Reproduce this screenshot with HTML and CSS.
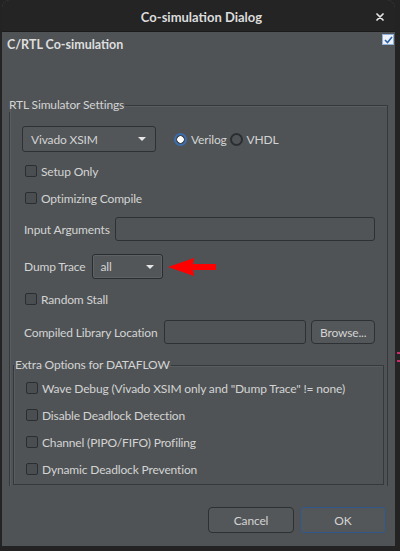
FILE: index.html
```html
<!DOCTYPE html>
<html>
<head>
<meta charset="utf-8">
<link rel="stylesheet" href="styles.css">
</head>
<body>
<div class="desktop">
  <div class="window">
    <div class="titlebar">
      <span class="title">Co-simulation Dialog</span>
      <svg class="close" width="8" height="8" viewBox="0 0 8 8"><path d="M1 1 L7 7 M7 1 L1 7" stroke="#e6e6e6" stroke-width="1.7" stroke-linecap="round"/></svg>
    </div>
    <div class="body">
      <div class="header">
        <span class="heading">C/RTL Co-simulation</span>
        <span class="enable-box"><svg width="9" height="8" viewBox="0 0 9 8"><path d="M1 4 L3.5 6.5 L8 1" fill="none" stroke="#2c63a8" stroke-width="1.6"/></svg></span>
      </div>
      <div class="scroll">
        <fieldset class="group outer">
          <legend>RTL Simulator Settings</legend>
          <div class="row sim-row">
            <div class="combo sim-combo"><span>Vivado XSIM</span><i class="arrow"></i></div>
            <label class="radio"><span class="dot on"></span>Verilog</label>
            <label class="radio"><span class="dot"></span>VHDL</label>
          </div>
          <div class="row check first"><span class="box"></span>Setup Only</div>
          <div class="row check"><span class="box"></span>Optimizing Compile</div>
          <div class="row field args-row">
            <span class="lbl">Input Arguments</span>
            <div class="input grow"></div>
          </div>
          <div class="row field dump-row">
            <span class="lbl">Dump Trace</span>
            <div class="combo dump-combo"><span>all</span><i class="arrow"></i></div>
            <svg class="red-arrow" width="50" height="18" viewBox="0 0 50 18"><polygon points="0,9 26,0 25,6 48,6 48,12 25,12 26,18" fill="#ff0000"/></svg>
          </div>
          <div class="row check stall"><span class="box"></span>Random Stall</div>
          <div class="row field lib-row">
            <span class="lbl">Compiled Library Location</span>
            <div class="input lib-input"></div>
            <div class="button browse">Browse...</div>
          </div>
          <fieldset class="group inner">
            <legend>Extra Options for DATAFLOW</legend>
            <div class="row check"><span class="box"></span>Wave Debug (Vivado XSIM only and "Dump Trace" != none)</div>
            <div class="row check"><span class="box"></span>Disable Deadlock Detection</div>
            <div class="row check"><span class="box"></span>Channel (PIPO/FIFO) Profiling</div>
            <div class="row check"><span class="box"></span>Dynamic Deadlock Prevention</div>
          </fieldset>
        </fieldset>
      </div>
      <div class="buttons">
        <div class="button dlg">Cancel</div>
        <div class="button dlg ok">OK</div>
      </div>
    </div>
  </div>
  <span class="pink p1"></span>
  <span class="pink p2"></span>
</div>
</body>
</html>
```

FILE: styles.css
```css
html, body {
  margin: 0;
  padding: 0;
  background: #262626;
}
body {
  font-family: Lato, "Noto Sans", sans-serif;
  font-size: 12px;
  letter-spacing: -0.15px;
  color: #d3d3d3;
}
.desktop {
  position: relative;
  width: 400px;
  height: 551px;
  overflow: hidden;
  background: #232323;
}
.window {
  margin-left: 2px;
  width: 393px;
  height: 546px;
  border-radius: 8px 8px 0 0;
  overflow: hidden;
  background: #4f5356;
  display: flex;
  flex-direction: column;
}
.titlebar {
  height: 32px;
  background: #242424;
  border-bottom: 1px solid #1b1b1b;
  box-sizing: border-box;
  display: flex;
  align-items: center;
  justify-content: center;
  position: relative;
  padding-top: 2px;
}
.title {
  font-size: 13px;
  font-weight: 700;
  letter-spacing: 0;
  color: #dcdcdc;
  margin-left: 6px;
}
.close {
  position: absolute;
  right: 11px;
  top: 13px;
}
.body {
  flex: 1;
  display: flex;
  flex-direction: column;
}
.header {
  height: 24px;
  display: flex;
  justify-content: space-between;
  align-items: flex-start;
  padding: 0 1px 0 5px;
}
.heading {
  font-weight: 700;
  font-size: 12.5px;
  letter-spacing: 0;
  color: #dedede;
  margin-top: 5px;
  line-height: 16px;
}
.enable-box {
  width: 10px;
  height: 9px;
  margin-top: 2px;
  background: #eef2f7;
  border: 1px solid #8fb0d8;
  display: flex;
  align-items: center;
  justify-content: center;
}
.scroll {
  height: 430px;
  overflow: hidden;
  margin-left: 7px;
  width: 379px;
}
.group {
  margin: 0;
  border: 1px solid #36393b;
  box-shadow: inset 1px 1px 0 #595d60;
  min-width: 0;
}
.group legend {
  padding: 0 1px 0 0;
  line-height: 14px;
  color: #d3d3d3;
}
.outer {
  margin-top: 42px;
  padding: 14px 3px 40px 3px;
}
.outer > legend {
  margin-left: -4px;
}
.row {
  display: flex;
  align-items: center;
  padding: 0 9px;
}
.sim-row {
  height: 26px;
}
.combo {
  box-sizing: border-box;
  height: 100%;
  border: 1px solid #2e3133;
  border-radius: 3px;
  background: #525659;
  display: flex;
  align-items: center;
  justify-content: space-between;
  padding: 0 9px 0 8px;
  color: #d3d3d3;
}
.sim-combo {
  width: 134px;
  height: 26px;
}
.arrow {
  width: 0;
  height: 0;
  border-left: 4px solid transparent;
  border-right: 4px solid transparent;
  border-top: 4px solid #e6e6e6;
}
.radio {
  display: flex;
  align-items: center;
  gap: 4px;
}
.radio:first-of-type {
  margin-left: 18px;
}
.radio + .radio {
  margin-left: 3px;
}
.dot {
  width: 9px;
  height: 9px;
  border-radius: 50%;
  border: 2px solid #2b2e30;
  box-sizing: content-box;
}
.dot.on {
  border-color: #3a6eae;
  background: radial-gradient(circle, #ffffff 0 3px, #45494c 3.5px);
}
.check {
  height: 22px;
  gap: 4px;
  padding-left: 12px;
  margin-top: 5px;
}
.check.first {
  margin-top: 8px;
}
.box {
  width: 10px;
  height: 10px;
  border: 1px solid #2b2e30;
  border-radius: 2px;
  background: #4a4e51;
  flex: none;
}
.field {
  padding-left: 11px;
  gap: 5px;
}
.lbl {
  white-space: nowrap;
}
.input {
  box-sizing: border-box;
  height: 100%;
  border: 1px solid #2e3133;
  border-radius: 3px;
  background: #505457;
}
.grow {
  flex: 1;
}
.args-row {
  height: 24px;
  margin-top: 8px;
}
.dump-row {
  height: 25px;
  margin-top: 13px;
  gap: 4px;
}
.dump-combo {
  width: 71px;
  margin-left: 2px;
  border-color: #2a2c2e;
  box-shadow: 0 0 0 0.5px #6a6e71 inset;
  padding-right: 8px;
}
.red-arrow {
  margin-left: 1px;
}
.stall {
  margin-top: 9px;
}
.lib-row {
  height: 24px;
  margin-top: 10px;
}
.lib-input {
  width: 144px;
  margin-left: 1px;
}
.button {
  box-sizing: border-box;
  border: 1px solid #2e3133;
  border-radius: 4px;
  background: #53575a;
  display: flex;
  align-items: center;
  justify-content: center;
  color: #d3d3d3;
}
.browse {
  height: 24px;
  width: 64px;
}
.inner {
  margin: 14px 0 0 0;
  padding: 2px 0 4px 12px;
}
.inner > legend {
  margin-left: -12px;
  padding-left: 1px;
}
.inner .check {
  padding-left: 0;
  margin-top: 5px;
}
.inner .check:first-of-type {
  margin-top: 3px;
}
.buttons {
  display: flex;
  justify-content: flex-end;
  gap: 6px;
  padding: 21px 9px 0 0;
}
.dlg {
  width: 86px;
  height: 26px;
}
.ok {
  border-color: #30578a;
}
.pink {
  position: absolute;
  left: 397px;
  width: 3px;
  height: 2px;
  background: #c2306a;
}
.p1 { top: 352px; }
.p2 { top: 360px; }
```
